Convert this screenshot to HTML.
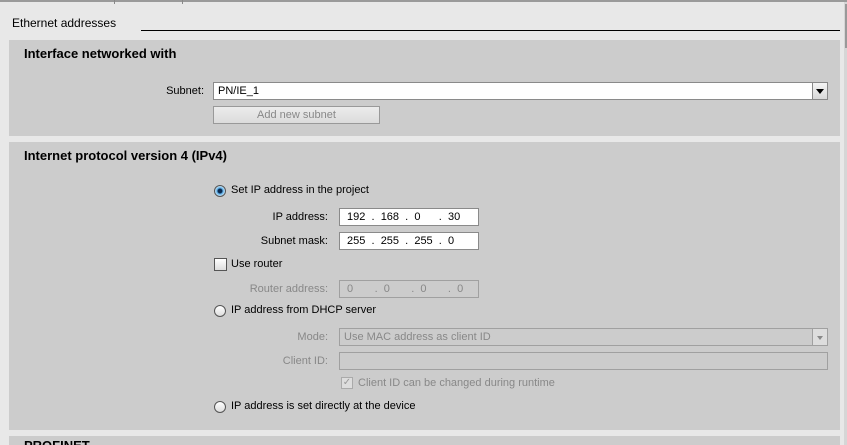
<!DOCTYPE html>
<html><head><style>
body{margin:0;width:847px;height:445px;background:#e8e8e8;position:relative;overflow:hidden;font-family:"Liberation Sans",sans-serif;font-size:11px;color:#000}
.a{position:absolute}
.panel{position:absolute;left:9px;width:831px;background:#cccccc}
.h{position:absolute;left:24px;font-weight:bold;font-size:13px}
.lbl{position:absolute;text-align:right;width:120px;font-size:11px}
.box{position:absolute;background:#fff;border:1px solid #8a8a8a;box-sizing:border-box;font-size:11px;line-height:16px;padding-left:4px}
.dis{background:#cccccc;border-color:#a0a0a0;color:#888}
.radio{position:absolute;width:12px;height:12px;border-radius:50%;border:1px solid #555;background:linear-gradient(#fff,#ddd);box-sizing:border-box}
.g{color:#888}
</style></head><body>
<div class="a" style="left:0;top:0;width:847px;height:2px;background:#9a9a9a"></div>
<div class="a" style="left:114px;top:0;width:1px;height:4px;background:#888"></div>
<div class="a" style="left:182px;top:0;width:1px;height:4px;background:#888"></div>
<div class="a" style="left:844px;top:2px;width:3px;height:443px;background:#d6d6d6"></div>
<div class="a" style="left:845px;top:4px;width:2px;height:44px;background:#999"></div>
<div class="a" style="left:12px;top:16px;font-size:12px">Ethernet addresses</div>
<div class="a" style="left:141px;top:30px;width:699px;height:1px;background:#000"></div>

<div class="panel" style="top:40px;height:96px"></div>
<div class="h" style="top:46px">Interface networked with</div>
<div class="lbl" style="left:84px;top:85px">Subnet:</div>
<div class="box" style="left:213px;top:82px;width:600px;height:18px">PN/IE_1</div>
<div class="a" style="left:812px;top:82px;width:16px;height:18px;border:1px solid #888;box-sizing:border-box;background:linear-gradient(#f4f4f4,#d8d8d8)"><div class="a" style="left:3px;top:6px;width:0;height:0;border-left:4px solid transparent;border-right:4px solid transparent;border-top:5px solid #000"></div></div>
<div class="a" style="left:213px;top:106px;width:167px;height:18px;border:1px solid #999;box-sizing:border-box;background:linear-gradient(#ececec,#dcdcdc);text-align:center;line-height:16px;color:#888">Add new subnet</div>

<div class="panel" style="top:142px;height:288px"></div>
<div class="h" style="top:148px">Internet protocol version 4 (IPv4)</div>
<div class="radio" style="left:214px;top:185px;background:radial-gradient(circle,#0a2a50 0,#0a2a50 2px,#5fb0e8 3px,#fff 6px)"></div>
<div class="a" style="left:231px;top:184px">Set IP address in the project</div>
<div class="lbl" style="left:208px;top:211px">IP address:</div>
<div class="box" style="left:339px;top:208px;width:140px;height:18px;word-spacing:0;white-space:pre"> 192  .  168  .  0      .  30</div>
<div class="lbl" style="left:208px;top:235px">Subnet mask:</div>
<div class="box" style="left:339px;top:232px;width:140px;height:18px;white-space:pre"> 255  .  255  .  255  .  0</div>
<div class="a" style="left:214px;top:258px;width:13px;height:13px;border:1px solid #555;box-sizing:border-box;background:linear-gradient(#fff,#ddd)"></div>
<div class="a" style="left:231px;top:258px">Use router</div>
<div class="lbl g" style="left:208px;top:283px">Router address:</div>
<div class="box dis" style="left:339px;top:280px;width:140px;height:18px;white-space:pre"> 0       .  0       .  0       .  0</div>
<div class="radio" style="left:214px;top:305px"></div>
<div class="a" style="left:231px;top:304px">IP address from DHCP server</div>
<div class="lbl g" style="left:208px;top:331px">Mode:</div>
<div class="box dis" style="left:339px;top:328px;width:474px;height:18px">Use MAC address as client ID</div>
<div class="a" style="left:812px;top:328px;width:16px;height:18px;border:1px solid #a0a0a0;box-sizing:border-box;background:#ddd"><div class="a" style="left:4px;top:7px;border-left:3px solid transparent;border-right:3px solid transparent;border-top:4px solid #888"></div></div>
<div class="lbl g" style="left:208px;top:355px">Client ID:</div>
<div class="box dis" style="left:339px;top:352px;width:489px;height:18px"></div>
<div class="a" style="left:341px;top:377px;width:12px;height:12px;border:1px solid #aaa;box-sizing:border-box;background:#ddd;color:#999;font-size:10px;line-height:10px;text-align:center">✓</div>
<div class="a g" style="left:358px;top:377px">Client ID can be changed during runtime</div>
<div class="radio" style="left:214px;top:401px"></div>
<div class="a" style="left:231px;top:400px">IP address is set directly at the device</div>

<div class="panel" style="top:436px;height:9px"></div>
<div class="h" style="top:438px;height:7px;overflow:hidden"><div style="margin-top:0">PROFINET</div></div>
</body></html>
